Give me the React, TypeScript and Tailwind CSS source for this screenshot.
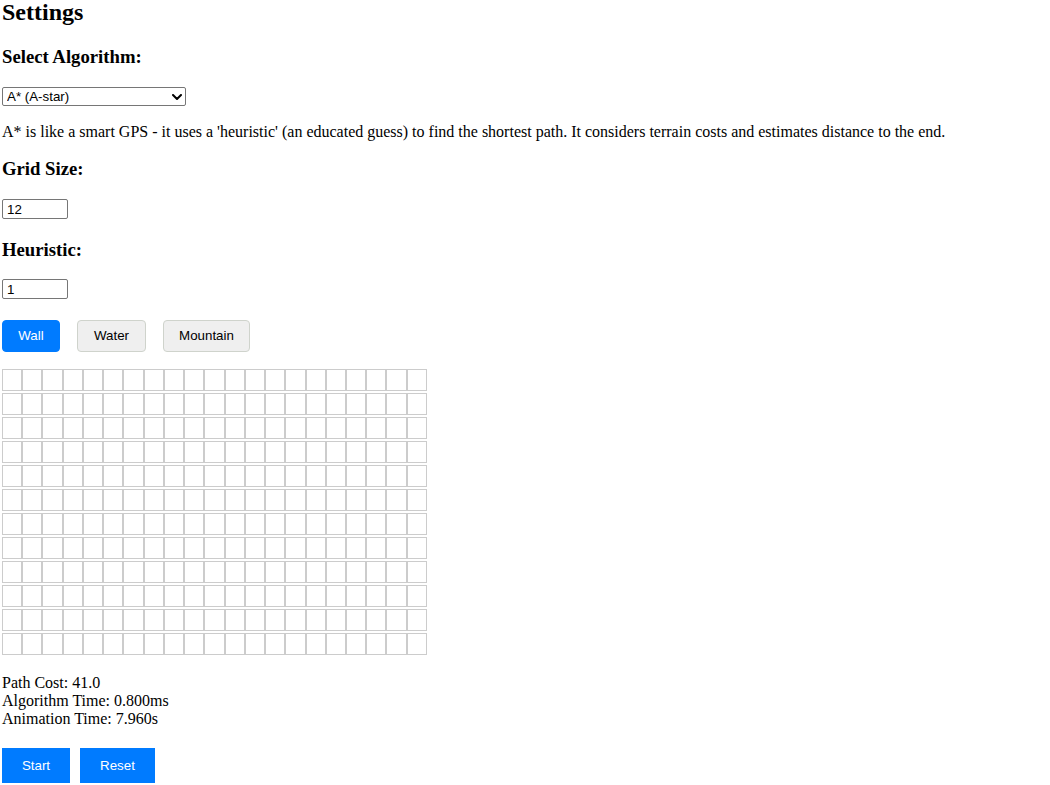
import React, { useState } from 'react';

const ROWS = 12;
const COLS = 21;

const serif = "font-['Liberation_Serif','Times_New_Roman',serif]";
const sans = "font-['Liberation_Sans',Arial,sans-serif]";

const Chevron = () => (
  <svg width="10" height="6" viewBox="0 0 10 6" className="pointer-events-none absolute right-[4px] top-[7px]">
    <polyline points="1,1 5,5 9,1" fill="none" stroke="#000" strokeWidth="2" strokeLinecap="round" strokeLinejoin="round" />
  </svg>
);

const App = () => {
  const [tool, setTool] = useState('wall');

  const tools = [
    { id: 'wall', label: 'Wall', w: 'w-[58px]' },
    { id: 'water', label: 'Water', w: 'w-[69px]' },
    { id: 'mountain', label: 'Mountain', w: 'w-[87px]' },
  ];

  return (
    <div className={`${serif} px-[2px] text-black bg-white min-h-[785px]`}>
      <h2 className="text-[24px] font-bold leading-[24px]">Settings</h2>

      {/* Algorithm */}
      <h3 className="mt-[22.2px] text-[18.72px] font-bold leading-[21.5px]">Select Algorithm:</h3>
      <div className="relative mt-[19.6px] w-[184px]">
        <select
          className={`${sans} block w-[184px] h-[19px] appearance-none border border-[#767676] rounded-[2px] bg-white pl-[4px] text-[13.33px] leading-[17px] text-black`}
          defaultValue="astar"
        >
          <option value="astar">A* (A-star)</option>
          <option value="dijkstra">Dijkstra</option>
          <option value="bfs">Breadth-First Search</option>
        </select>
        <Chevron />
      </div>
      <p className="mt-[17px] text-[16px] leading-[18.4px]">
        A* is like a smart GPS - it uses a 'heuristic' (an educated guess) to find the shortest path. It considers terrain costs and estimates distance to the end.
      </p>

      {/* Grid size */}
      <h3 className="mt-[16.4px] text-[18.72px] font-bold leading-[21.5px]">Grid Size:</h3>
      <input
        type="text"
        defaultValue="12"
        className={`${sans} mt-[19.6px] block w-[66px] h-[20px] border border-[#767676] rounded-[2px] pl-[4px] text-[13.33px] text-black`}
      />

      {/* Heuristic */}
      <h3 className="mt-[19.6px] text-[18.72px] font-bold leading-[21.5px]">Heuristic:</h3>
      <input
        type="text"
        defaultValue="1"
        className={`${sans} mt-[19.2px] block w-[66px] h-[20px] border border-[#767676] rounded-[2px] pl-[4px] text-[13.33px] text-black`}
      />

      {/* Terrain tools */}
      <div className="mt-[21px] flex gap-[17px]">
        {tools.map((t) => (
          <button
            key={t.id}
            onClick={() => setTool(t.id)}
            className={`${sans} ${t.w} h-[32px] rounded-[4px] border text-[13.33px] ${
              tool === t.id
                ? 'bg-[#007bff] border-[#007bff] text-white'
                : 'bg-[#efefef] border-[#cfd3cc] text-black'
            }`}
          >
            {t.label}
          </button>
        ))}
      </div>

      {/* Grid */}
      <div className="mt-[16.8px] flex w-[425px] flex-col gap-[2px]">
        {Array.from({ length: ROWS }).map((_, r) => (
          <div key={r} className="flex">
            {Array.from({ length: COLS }).map((_, c) => (
              <div key={c} className="h-[22px] flex-1 border border-[#cccccc] bg-white" />
            ))}
          </div>
        ))}
      </div>

      {/* Stats */}
      <div className="mt-[19px] text-[16px] leading-[18px]">
        <div>Path Cost: 41.0</div>
        <div>Algorithm Time: 0.800ms</div>
        <div>Animation Time: 7.960s</div>
      </div>

      <div className="mt-[19.8px] flex gap-[10px]">
        <button className={`${sans} w-[68px] h-[35px] bg-[#007bff] text-white text-[13.33px]`}>Start</button>
        <button className={`${sans} w-[75px] h-[35px] bg-[#007bff] text-white text-[13.33px]`}>Reset</button>
      </div>
    </div>
  );
};

export default App;
